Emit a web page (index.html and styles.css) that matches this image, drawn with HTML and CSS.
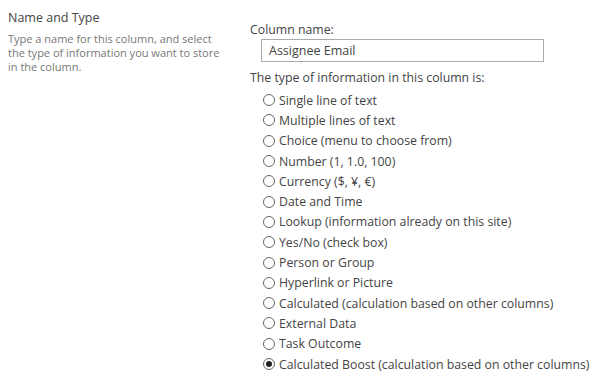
FILE: index.html
```html
<!DOCTYPE html>
<html lang="en">
<head>
    <meta charset="UTF-8">
    <link rel="stylesheet" href="styles.css">
</head>
<body>
    <div class="section">
        <div class="section-desc">
            <h3 class="section-title">Name and Type</h3>
            <p class="section-help">Type a name for this column, and select the type of information you want to store in the column.</p>
        </div>
        <div class="section-body">
            <div class="field-label">Column name:</div>
            <div class="field-input"><input type="text" class="text-box" value="Assignee Email"></div>
            <div class="field-label">The type of information in this column is:</div>
            <div class="type-list">
                <label class="type-option"><input type="radio" name="type"><span>Single line of text</span></label>
                <label class="type-option"><input type="radio" name="type"><span>Multiple lines of text</span></label>
                <label class="type-option"><input type="radio" name="type"><span>Choice (menu to choose from)</span></label>
                <label class="type-option"><input type="radio" name="type"><span>Number (1, 1.0, 100)</span></label>
                <label class="type-option"><input type="radio" name="type"><span>Currency ($, ¥, €)</span></label>
                <label class="type-option"><input type="radio" name="type"><span>Date and Time</span></label>
                <label class="type-option"><input type="radio" name="type"><span>Lookup (information already on this site)</span></label>
                <label class="type-option"><input type="radio" name="type"><span>Yes/No (check box)</span></label>
                <label class="type-option"><input type="radio" name="type"><span>Person or Group</span></label>
                <label class="type-option"><input type="radio" name="type"><span>Hyperlink or Picture</span></label>
                <label class="type-option"><input type="radio" name="type"><span>Calculated (calculation based on other columns)</span></label>
                <label class="type-option"><input type="radio" name="type"><span>External Data</span></label>
                <label class="type-option"><input type="radio" name="type"><span>Task Outcome</span></label>
                <label class="type-option"><input type="radio" name="type" checked><span>Calculated Boost (calculation based on other columns)</span></label>
            </div>
        </div>
    </div>
</body>
</html>
```

FILE: styles.css
```css
*{
    padding: 0;
    margin: 0;
    box-sizing: border-box;
}
body{
    font-family: "Open Sans", "Noto Sans", sans-serif;
    font-size: 12.3px;
    color: #444;
    background: #fff;
}
.section{
    display: flex;
    padding: 9px 0 0 8px;
}
.section-desc{
    width: 242px;
    flex-shrink: 0;
    padding-right: 20px;
}
.section-title{
    font-size: 12.5px;
    font-weight: normal;
    color: #444;
    line-height: 17px;
}
.section-help{
    margin-top: 6px;
    font-size: 11px;
    line-height: 14px;
    color: #777;
}
.section-body{
    padding-top: 12px;
    white-space: nowrap;
}
.field-label{
    line-height: 17px;
}
.field-input{
    padding: 1px 0 7px 11px;
}
.text-box{
    width: 283px;
    height: 23px;
    border: 1px solid #ababab;
    padding: 0 7px;
    font-family: inherit;
    font-size: 12.5px;
    color: #444;
    outline: none;
}
.type-list{
    display: flex;
    flex-direction: column;
    padding: 4px 0 0 13px;
}
.type-option{
    display: flex;
    align-items: center;
    height: 20.3px;
    gap: 4px;
}
.type-option input{
    appearance: none;
    width: 12px;
    height: 12px;
    margin: 0;
    border: 1px solid #666;
    border-radius: 50%;
    background: #fff;
    display: grid;
    place-content: center;
}
.type-option input:checked::before{
    content: "";
    width: 6px;
    height: 6px;
    border-radius: 50%;
    background: #222;
}
```
